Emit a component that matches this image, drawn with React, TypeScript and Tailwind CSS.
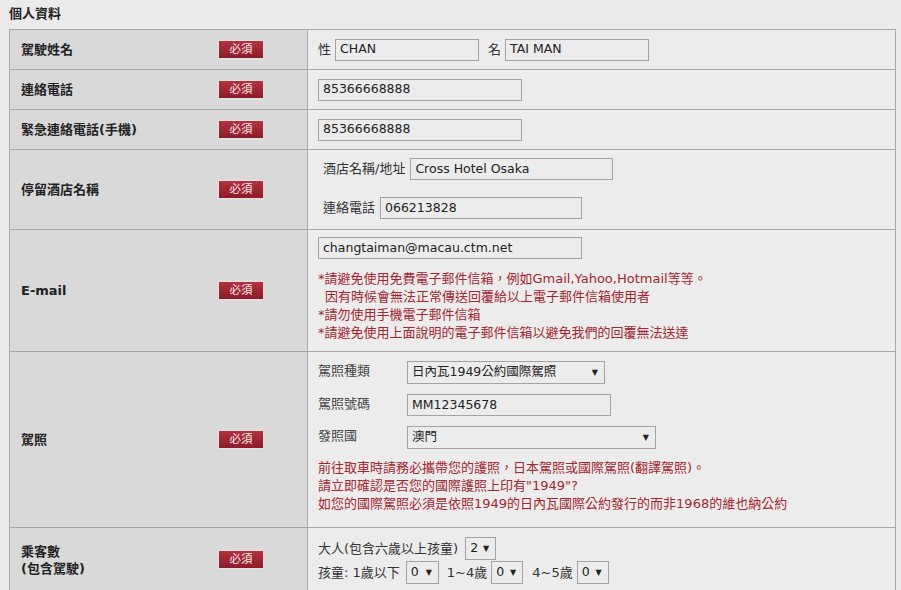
import React from "react";

const FONT = "font-['DejaVu_Sans','Noto_Sans_CJK_TC',sans-serif]";

function Badge() {
  return (
    <span className="inline-flex h-[17px] w-[44px] items-center justify-center bg-gradient-to-b from-[#b3313f] to-[#8c1b2a] text-[11.5px] leading-none text-[#f6e8ea] shadow-[0_0_2px_rgba(255,255,255,0.8)]">
      必須
    </span>
  );
}

function Label({ children }: { children: React.ReactNode }) {
  return (
    <div className="flex w-[298px] shrink-0 items-center border-r border-[#a9a9a9] bg-[#d9d9d9] pl-[11px]">
      <div className="w-[198px] text-[13px] font-bold leading-[17px] text-[#222]">{children}</div>
      <Badge />
    </div>
  );
}

function Input({ value, w }: { value: string; w: string }) {
  return (
    <div className={`flex h-[22px] items-center border border-[#a3a3a3] bg-[#ececec] pl-[4px] text-[12.5px] text-[#222] ${w}`}>
      {value}
    </div>
  );
}

function Select({ value, w }: { value: string; w: string }) {
  return (
    <div className={`flex h-[23px] items-center justify-between border border-[#a3a3a3] bg-[#ececec] pl-[4px] pr-[6px] text-[12.5px] text-[#222] ${w}`}>
      <span>{value}</span>
      <span className="text-[8px] text-[#222]">▼</span>
    </div>
  );
}

export default function App() {
  return (
    <div className={`h-[590px] w-[901px] overflow-hidden bg-[#ebebeb] ${FONT} text-[#333]`}>
      {/* Header */}
      <div className="flex h-[29px] items-center pl-[9px] pb-[1px] text-[13px] font-bold text-[#222]">個人資料</div>

      <div className="ml-[9px] w-[887px] border border-[#a9a9a9] bg-[#ececec]">
        {/* 駕駛姓名 */}
        <div className="flex h-[40px] border-b border-[#a9a9a9]">
          <Label>駕駛姓名</Label>
          <div className="flex items-center pl-[10px] text-[13px]">
            <span className="mr-[4px]">性</span>
            <Input value="CHAN" w="w-[144px]" />
            <span className="ml-[9px] mr-[4px]">名</span>
            <Input value="TAI MAN" w="w-[144px]" />
          </div>
        </div>

        {/* 連絡電話 */}
        <div className="flex h-[40px] border-b border-[#a9a9a9]">
          <Label>連絡電話</Label>
          <div className="flex items-center pl-[10px]">
            <Input value="85366668888" w="w-[204px]" />
          </div>
        </div>

        {/* 緊急連絡電話 */}
        <div className="flex h-[40px] border-b border-[#a9a9a9]">
          <Label>緊急連絡電話(手機)</Label>
          <div className="flex items-center pl-[10px]">
            <Input value="85366668888" w="w-[204px]" />
          </div>
        </div>

        {/* 停留酒店名稱 */}
        <div className="flex h-[80px] border-b border-[#a9a9a9]">
          <Label>停留酒店名稱</Label>
          <div className="flex flex-col gap-[17px] pl-[15px] pt-[8px] text-[13px]">
            <div className="flex items-center gap-[5px]">
              <span>酒店名稱/地址</span>
              <Input value="Cross Hotel Osaka" w="w-[203px]" />
            </div>
            <div className="flex items-center gap-[5px]">
              <span>連絡電話</span>
              <Input value="066213828" w="w-[202px]" />
            </div>
          </div>
        </div>

        {/* E-mail */}
        <div className="flex h-[122px] border-b border-[#a9a9a9]">
          <Label>E-mail</Label>
          <div className="flex flex-col pl-[10px] pt-[7px]">
            <Input value="changtaiman@macau.ctm.net" w="w-[264px]" />
            <div className="mt-[11px] text-[13px] leading-[18px] text-[#a3262f]">
              <div>*請避免使用免費電子郵件信箱，例如Gmail,Yahoo,Hotmail等等。</div>
              <div className="pl-[7px]">因有時候會無法正常傳送回覆給以上電子郵件信箱使用者</div>
              <div>*請勿使用手機電子郵件信箱</div>
              <div>*請避免使用上面說明的電子郵件信箱以避免我們的回覆無法送達</div>
            </div>
          </div>
        </div>

        {/* 駕照 */}
        <div className="flex h-[176px] border-b border-[#a9a9a9]">
          <Label>駕照</Label>
          <div className="flex flex-col pl-[10px] pt-[9px] text-[13px]">
            <div className="flex flex-col gap-[10px]">
              <div className="flex items-start">
                <span className="w-[89px] text-[#444]">駕照種類</span>
                <Select value="日內瓦1949公約國際駕照" w="w-[198px]" />
              </div>
              <div className="flex items-start">
                <span className="w-[89px] text-[#444]">駕照號碼</span>
                <Input value="MM12345678" w="w-[204px]" />
              </div>
              <div className="flex items-start">
                <span className="w-[89px] text-[#444]">發照國</span>
                <Select value="澳門" w="w-[249px]" />
              </div>
            </div>
            <div className="mt-[10px] leading-[18px] text-[#a3262f]">
              <div>前往取車時請務必攜帶您的護照，日本駕照或國際駕照(翻譯駕照)。</div>
              <div>請立即確認是否您的國際護照上印有"1949"?</div>
              <div>如您的國際駕照必須是依照1949的日內瓦國際公約發行的而非1968的維也納公約</div>
            </div>
          </div>
        </div>

        {/* 乘客數 */}
        <div className="flex h-[70px]">
          <div className="flex w-[298px] shrink-0 items-center border-r border-[#a9a9a9] bg-[#d9d9d9] pb-[7px] pl-[11px]">
            <div className="w-[198px] text-[13px] font-bold leading-[17px] text-[#222]">
              乘客數
              <br />
              (包含駕駛)
            </div>
            <Badge />
          </div>
          <div className="flex flex-col gap-[1px] pl-[10px] pt-[9px] text-[13px]">
            <div className="flex items-center gap-[7px]">
              <span>大人(包含六歲以上孩童)</span>
              <Select value="2" w="w-[31px]" />
            </div>
            <div className="flex items-center">
              <span className="mr-[6px]">孩童: 1歲以下</span>
              <Select value="0" w="w-[33px]" />
              <span className="ml-[8px] mr-[4px]">1~4歲</span>
              <Select value="0" w="w-[32px]" />
              <span className="ml-[9px] mr-[4px]">4~5歲</span>
              <Select value="0" w="w-[32px]" />
            </div>
          </div>
        </div>
      </div>
    </div>
  );
}
